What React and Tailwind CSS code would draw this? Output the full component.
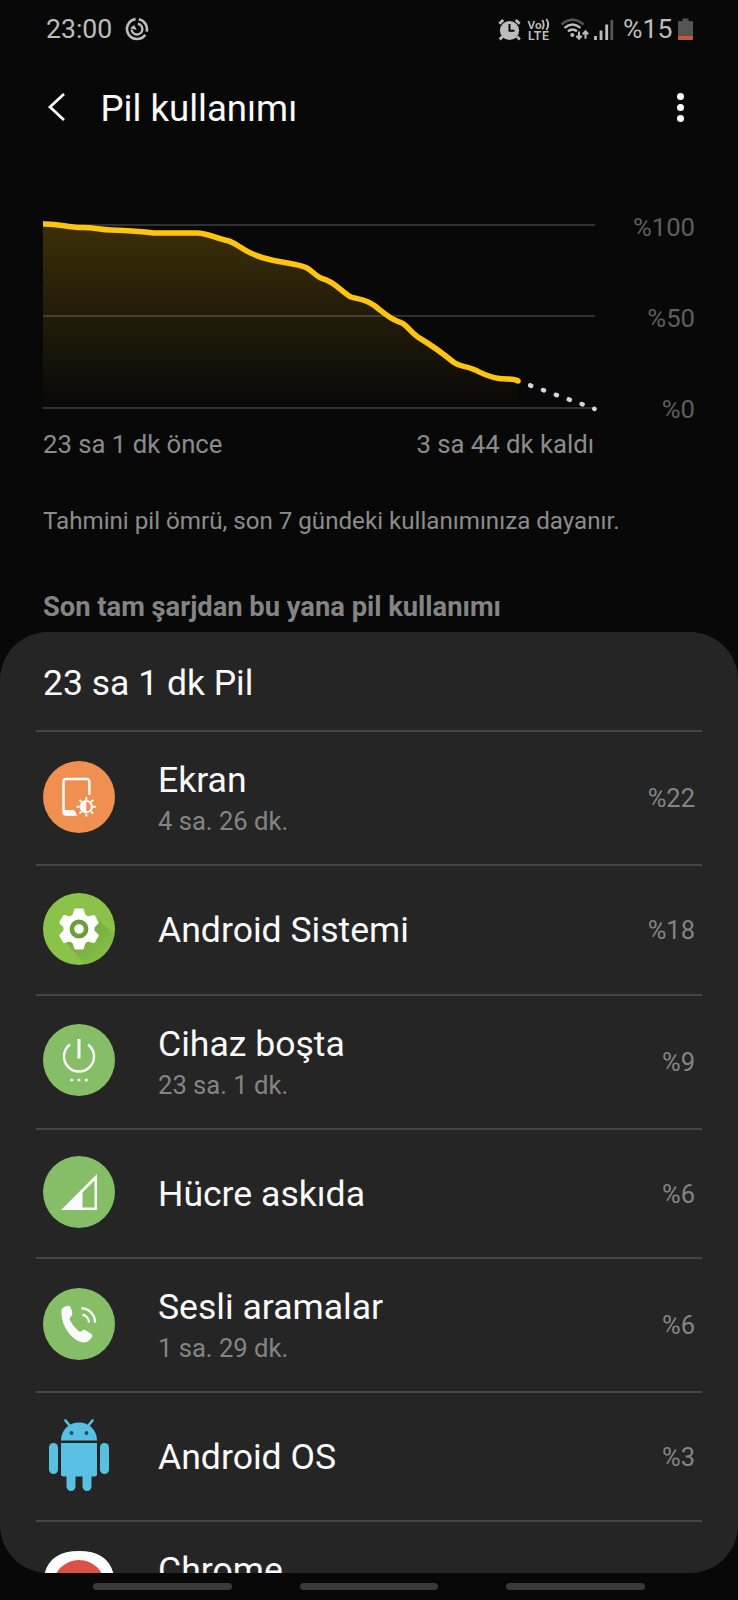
function StatusBar() {
  return (
    <div className="flex h-[57px] items-center pl-[46px] pr-[45px] text-[26.600px] leading-[32px] text-[#bdbdbd]">
      <span className="w-[66px]">23:00</span>
      <svg className="ml-[13px] size-[24px]" viewBox="0 0 24 24" fill="none" stroke="#bdbdbd">
        <path d="M10.6 2.1A10 10 0 1 0 20.2 17.7" strokeWidth="2.6" />
        <path d="M13.8 2.2A10 10 0 0 1 21.6 14.6" strokeWidth="2.6" />
        <path d="M6.6 12.6a5.4 5.4 0 1 0 6.2-5.9" strokeWidth="2.4" />
        <path d="M5 11.2 9.2 8l2.6 5z" fill="#bdbdbd" stroke="none" />
      </svg>
      <span className="flex-1" />
      <svg className="h-[26px] w-[120px]" viewBox="496 14 120 26" fill="none" stroke="#bdbdbd">
        <circle cx="509.5" cy="28.5" r="9.6" fill="#bdbdbd" stroke="none" />
        <path d="M509.5 22v6.8h5" stroke="#080808" strokeWidth="2" />
        <path d="M499.3 21.8l4-3.800M519.700 21.800l-4-3.800M502.500 34.500l-2.800 3M517 34.500l2.800 3" strokeWidth="2.700" />
        <path d="M542.3 18q2.800 4.700 0 9.400M546.300 17q3.800 5.500 0 11" strokeWidth="1.800" />
        <text fontWeight="600" fill="#bdbdbd" stroke="none">
          <tspan x="527.500" y="26.800" fontSize="11.800">Vo</tspan>
          <tspan x="528" y="38.300" fontSize="12.300" textLength="21">LTE</tspan>
        </text>
        <path d="M561.5 22.5q11-9.5 22 0" stroke="#555" strokeWidth="2.4" />
        <path d="M564.5 25.8q8-6.8 16 0M568 29.3q4.500-3.600 9 0" strokeWidth="2.4" />
        <circle cx="572.3" cy="33" r="2" fill="#bdbdbd" stroke="none" />
        <path d="M579 29.500v7M576.300 33.800l2.700 2.900 2.700-2.900M585.500 36.700v-7M582.800 32.200l2.700-2.900 2.700 2.900" strokeWidth="2" />
        <path d="M595.500 34v4M601 28.500v9.500M606.700 22.500v15.500" strokeWidth="2.800" />
        <path d="M611.800 18v20" stroke="#555" strokeWidth="2.800" />
      </svg>
      <span className="ml-[7px] w-[50px]">%15</span>
      <svg className="ml-[5px] h-[22px] w-[15px]" viewBox="0 0 15 22">
        <path d="M1 3h3.500V.5h6V3H14a1 1 0 0 1 1 1v13.500H0V4a1 1 0 0 1 1-1z" fill="#555" />
        <path d="M0 17.500h15V21a1 1 0 0 1-1 1H1a1 1 0 0 1-1-1z" fill="#bf5b3b" />
      </svg>
    </div>
  );
}

function Header() {
  return (
    <div className="flex h-[100px] items-center pl-[45px] pr-[54px]">
      <svg className="h-[30px] w-[22px]" viewBox="0 0 22 30" fill="none" stroke="#fafafa" strokeWidth="2.8">
        <path d="M19 2 5 15l14 13" />
      </svg>
      <h1 className="ml-[33.500px] pt-[4px] text-[36.600px] leading-[44px] text-[#fafafa]">Pil kullanımı</h1>
      <span className="flex-1" />
      <div className="flex flex-col gap-[4px]">
        <i className="size-[7px] rounded-full bg-white" />
        <i className="size-[7px] rounded-full bg-white" />
        <i className="size-[7px] rounded-full bg-white" />
      </div>
    </div>
  );
}

const curve =
  "M43 224C60 223.500 66 227.500 82 227.500C96 227.500 98 229.500 112 230C126 230.500 142 231.500 154 233L197 233C206 233 215 237.500 227 240.500C238 243 241 251 262 257.500C280 263 295 263 306 267.500C313 271 316 276.500 322 278.500C334 281 343 293 351 297C357 299 366 299 375 306C384 313 389 318 398 321.500C407 323 409 332 421 339C436 348 446 356 454 362.500C461 367.500 464 365 474 369.500C483 373.500 488 377 499 378.500C506 379.500 514 378 518 381";

function Chart() {
  return (
    <section className="flex pl-[42px] pr-[43px]">
      <div className="w-[555px]">
        <svg className="block h-[200px] w-[555px]" viewBox="42 215 555 200" fill="none">
          <defs>
            <linearGradient id="fade" x1="0" y1="224" x2="0" y2="408" gradientUnits="userSpaceOnUse">
              <stop offset="0" stopColor="#ffc107" stopOpacity="0.21" />
              <stop offset="1" stopColor="#ffc107" stopOpacity="0" />
            </linearGradient>
          </defs>
          <path d="M43 225H595M43 316H595M43 408H595" stroke="#303030" strokeWidth="2" />
          <path d={curve + "V408H43Z"} fill="url(#fade)" />
          <path d={curve} stroke="#ffc40c" strokeWidth="5.500" />
          <circle cx="518" cy="381" r="2.750" fill="#ffc40c" />
          <path d="M530.200 385.400l1 .4M543 390l1 .4M555.900 394.800l1 .4M568.800 399.400l1 .4M581.600 404l1 .4M594.300 408.800l.2 .1" stroke="#cfd8dc" strokeWidth="4.500" strokeLinecap="round" />
        </svg>
        <div className="flex justify-between pl-[1px] pr-[3px] pt-[13px] pb-[1px] text-[25.700px] leading-[32px] text-[#8c8c8c]">
          <span>23 sa 1 dk önce</span>
          <span>3 sa 44 dk kaldı</span>
        </div>
      </div>
      <div className="flex flex-1 flex-col items-end gap-[59px] -mt-[4px] text-[25.700px] leading-[32px] text-[#5e5e5e]">
        <span>%100</span>
        <span>%50</span>
        <span>%0</span>
      </div>
    </section>
  );
}

function Disc({ color, children }) {
  return (
    <svg className="size-[72px]" viewBox="0 0 72 72" fill="none">
      <circle cx="36" cy="36" r="36" fill={color} />
      {children}
    </svg>
  );
}

const icons = {
  screen: (
    <Disc color="#ef9050">
      <path d="M46.300 34V20.500a2.500 2.500 0 0 0-2.500-2.500H23a2.500 2.500 0 0 0-2.500 2.500V51a2.500 2.500 0 0 0 2.500 2.500H33" stroke="#fafafa" strokeWidth="2.500" />
      <path d="M20.500 49h10.500l3.500 5.600H23a2.500 2.500 0 0 1-2.500-2.500z" fill="#fafafa" />
      <circle cx="43.300" cy="45.700" r="5.600" stroke="#fafafa" strokeWidth="2" />
      <path d="M43.300 40a5.700 5.700 0 0 0 0 11.400z" fill="#fafafa" />
      <path d="M43.300 36v3M43.300 52.400v3M33.600 45.700h3M50 45.700h3M36.500 38.900l2.100 2.100M48 50.400l2.100 2.100M36.500 52.500l2.100-2.100M48 41l2.100-2.100" stroke="#fafafa" strokeWidth="2" />
    </Disc>
  ),
  gear: (
    <Disc color="#8bc34a">
      <defs>
        <linearGradient id="gearShade" x1="36" y1="36" x2="60" y2="60" gradientUnits="userSpaceOnUse">
          <stop offset="0" stopColor="#689f38" stopOpacity="0.7" />
          <stop offset="1" stopColor="#689f38" stopOpacity="0.2" />
        </linearGradient>
      </defs>
      <path d="M21 47 42 71.500A36 36 0 0 0 71.500 42L54 25z" fill="url(#gearShade)" />
      <g transform="translate(36 36)" fill="#fff">
        <circle r="15.500" />
        {[0, 60, 120, 180, 240, 300].map((a) => (
          <path key={a} d="M-7 -12-4.800 -19.500a1.500 1.500 0 0 1 1.400-1h6.800a1.500 1.500 0 0 1 1.400 1L7 -12z" transform={`rotate(${a})`} />
        ))}
        <circle r="7.100" stroke="#689f38" strokeWidth="4.600" />
      </g>
    </Disc>
  ),
  power: (
    <Disc color="#86bd67">
      <path d="M27 20.500a15 15 0 1 0 18 0" stroke="#fafafa" strokeWidth="2.400" />
      <path d="M36 15v19.500" stroke="#fafafa" strokeWidth="3" />
      <circle cx="28.700" cy="56" r="1.600" fill="#fafafa" />
      <circle cx="36" cy="56" r="1.600" fill="#fafafa" />
      <circle cx="43.300" cy="56" r="1.600" fill="#fafafa" />
    </Disc>
  ),
  cell: (
    <Disc color="#86bd67">
      <path d="M18 54 54 18v36zM39.500 51.500h12V24.500l-12 12z" fill="#fafafa" fillRule="evenodd" />
    </Disc>
  ),
  call: (
    <Disc color="#86bd67">
      <path d="M19 20.500q4-3.500 7.500-2.500 1.500 1 2.500 5.500 1 4-1.500 5.500-1.500 1.500-.5 3.500 3.500 6.500 8.500 10.500 2 1.500 3.500 0 1.500-2 4-.5l5.500 3.500q1.500 1.200.5 3-3.500 6-9.500 5.500-8.500-2-14.500-10.500-6-8.500-6.500-17.500-.5-4 .5-6z" fill="#fafafa" />
      <path d="M38.500 20.300a14 14 0 0 1 13.500 14.500M39.500 26.800a8 8 0 0 1 6.500 7.800" stroke="#fafafa" strokeWidth="2.400" />
    </Disc>
  ),
  android: (
    <svg className="size-[72px]" viewBox="0 0 72 72" fill="#59bfe3">
      <path d="M18 21.500C18 11 26 3.500 36 3.500S54 11 54 21.500z" />
      <path d="M22.500 1.500 27 7M49.500 1.500 45 7" stroke="#59bfe3" strokeWidth="2.600" strokeLinecap="round" />
      <circle cx="28.500" cy="14" r="1.900" fill="#234b5c" />
      <circle cx="43.500" cy="14" r="1.900" fill="#234b5c" />
      <path d="M18 24h36v31a2.500 2.500 0 0 1-2.500 2.500H48.500v10a4.500 4.500 0 0 1-9 0v-10h-7v10a4.500 4.500 0 0 1-9 0v-10H20.500A2.500 2.500 0 0 1 18 55z" />
      <rect x="6" y="24" width="9" height="31" rx="4.500" />
      <rect x="57" y="24" width="9" height="31" rx="4.500" />
    </svg>
  ),
  chrome: (
    <svg className="size-[72px]" viewBox="0 0 72 72">
      <path d="M36 0C60 0 72 12 72 36S60 72 36 72 0 60 0 36 12 0 36 0z" fill="#fff" />
      <circle cx="36" cy="35" r="26" fill="#dd5144" />
    </svg>
  ),
};

const rows = [
  { icon: "screen", name: "Ekran", time: "4 sa. 26 dk.", pct: "%22", size: "h-[134px]", lift: "pb-[2px]" },
  { icon: "gear", name: "Android Sistemi", pct: "%18", size: "h-[130px]", lift: "pb-[2px]" },
  { icon: "power", name: "Cihaz boşta", time: "23 sa. 1 dk.", pct: "%9", size: "h-[134px]", lift: "pb-[4px]" },
  { icon: "cell", name: "Hücre askıda", pct: "%6", size: "h-[129px]", lift: "pb-[3px]" },
  { icon: "call", name: "Sesli aramalar", time: "1 sa. 29 dk.", pct: "%6", size: "h-[134px]", lift: "pb-[3px]" },
  { icon: "android", name: "Android OS", pct: "%3", size: "h-[129px]", lift: "pb-[3px]" },
  { icon: "chrome", name: "Chrome", twoLine: true, size: "h-[134px]", lift: "pb-[2px]" },
];

function Row({ row }) {
  return (
    <li className={`${row.size} flex items-center border-b-2 border-[#464646] pl-[7px] pr-[7px]`}>
      <div className={row.lift}>{icons[row.icon]}</div>
      <div className="ml-[43px] flex-1">
        <div className="text-[35.600px] leading-[42px] text-[#fafafa]">{row.name}</div>
        {row.time && <div className="pt-[4px] text-[25.600px] leading-[32px] text-[#848484]">{row.time}</div>}
        {row.twoLine && <div className="h-[37px]" />}
      </div>
      <span className="text-[25.500px] leading-[32px] text-[#848484]">{row.pct}</span>
    </li>
  );
}

export default function App() {
  return (
    <div className="flex h-[1600px] w-[738px] flex-col overflow-hidden bg-[#080808] font-['Roboto',sans-serif]">
      <StatusBar />
      <Header />
      <div className="h-[58px]" />
      <Chart />
      <p className="mt-[44px] pl-[43px] text-[24.150px] leading-[32px] text-[#8c8c8c]">
        Tahmini pil ömrü, son 7 gündeki kullanımınıza dayanır.
      </p>
      <h2 className="mt-[54px] pl-[43px] text-[27.300px] font-bold leading-[32px] text-[#848484]">
        Son tam şarjdan bu yana pil kullanımı
      </h2>
      <main className="mt-[9px] flex h-[941px] shrink-0 flex-col overflow-hidden rounded-[48px] bg-[#252525] px-[36px]">
        <div className="flex h-[100px] shrink-0 items-center border-b-2 border-[#464646] pl-[7px] pt-[5px] text-[35.500px] text-[#fafafa]">
          23 sa 1 dk Pil
        </div>
        <ul>
          {rows.map((r) => (
            <Row key={r.name} row={r} />
          ))}
        </ul>
      </main>
      <nav className="flex gap-[68px] pl-[93px] pt-[10px]">
        <i className="h-[7px] w-[138.500px] rounded-full bg-[#3a3a3a]" />
        <i className="h-[7px] w-[138.500px] rounded-full bg-[#3a3a3a]" />
        <i className="h-[7px] w-[138.500px] rounded-full bg-[#3a3a3a]" />
      </nav>
    </div>
  );
}
